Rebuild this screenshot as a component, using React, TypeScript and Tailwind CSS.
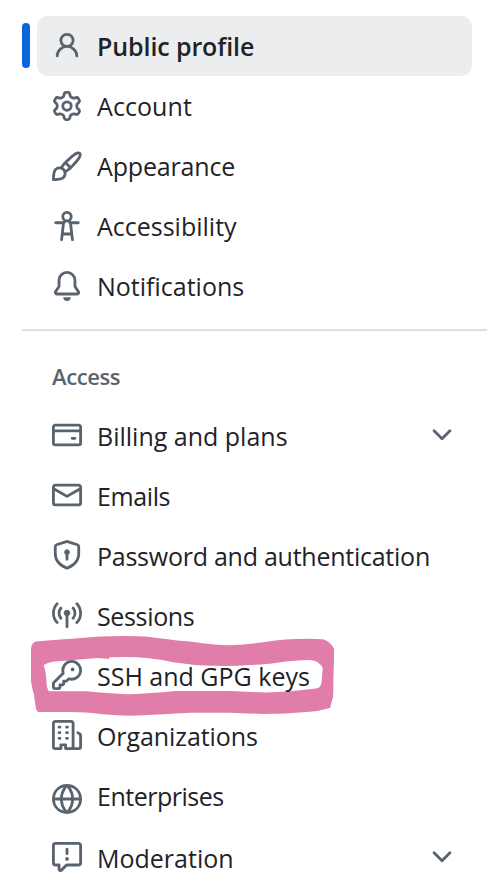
import type { ReactNode } from "react";

const ICONS = {
  person:
    "M10.561 8.073a6.005 6.005 0 0 1 3.432 5.142.75.75 0 1 1-1.498.07 4.5 4.5 0 0 0-8.99 0 .75.75 0 0 1-1.498-.07 6.004 6.004 0 0 1 3.431-5.142 3.999 3.999 0 1 1 5.123 0ZM10.5 5a2.5 2.5 0 1 0-5 0 2.5 2.5 0 0 0 5 0Z",
  gear: "M8 0a8.2 8.2 0 0 1 .701.031C9.444.095 9.99.645 10.16 1.29l.288 1.107c.018.066.079.158.212.224.231.114.454.243.668.386.123.082.233.09.299.071l1.103-.303c.644-.176 1.392.021 1.82.63.27.385.506.792.704 1.218.315.675.111 1.422-.364 1.891l-.814.806c-.049.048-.098.147-.088.294.016.257.016.515 0 .772-.01.147.038.246.088.294l.814.806c.475.469.679 1.216.364 1.891a7.977 7.977 0 0 1-.704 1.217c-.428.61-1.176.807-1.82.63l-1.102-.302c-.067-.019-.177-.011-.3.071a5.909 5.909 0 0 1-.668.386c-.133.066-.194.158-.211.224l-.29 1.106c-.168.646-.715 1.196-1.458 1.26a8.006 8.006 0 0 1-1.402 0c-.743-.064-1.289-.614-1.458-1.26l-.289-1.106c-.018-.066-.079-.158-.212-.224a5.738 5.738 0 0 1-.668-.386c-.123-.082-.233-.09-.299-.071l-1.103.303c-.644.176-1.392-.021-1.82-.63a8.12 8.12 0 0 1-.704-1.218c-.315-.675-.111-1.422.363-1.891l.815-.806c.05-.048.098-.147.088-.294a6.214 6.214 0 0 1 0-.772c.01-.147-.038-.246-.088-.294l-.815-.806C.635 6.045.431 5.298.746 4.623a7.92 7.92 0 0 1 .704-1.217c.428-.61 1.176-.807 1.82-.63l1.102.302c.067.019.177.011.3-.071.214-.143.437-.272.668-.386.133-.066.194-.158.211-.224l.29-1.106C6.009.645 6.556.095 7.299.03 7.53.01 7.764 0 8 0Zm-.571 1.525c-.036.003-.108.036-.137.146l-.289 1.105c-.147.561-.549.967-.998 1.189-.173.086-.34.183-.5.29-.417.278-.97.423-1.529.27l-1.103-.303c-.109-.03-.175.016-.195.045-.22.312-.412.644-.573.99-.014.031-.021.11.059.19l.815.806c.411.406.562.957.53 1.456a4.709 4.709 0 0 0 0 .582c.032.499-.119 1.05-.53 1.456l-.815.806c-.081.08-.073.159-.059.19.162.346.353.677.573.989.02.03.085.076.195.046l1.102-.303c.56-.153 1.113-.008 1.53.27.161.107.328.204.501.29.447.222.85.629.997 1.189l.289 1.105c.029.109.101.143.137.146a6.6 6.6 0 0 0 1.142 0c.036-.003.108-.036.137-.146l.289-1.105c.147-.561.549-.967.998-1.189.173-.086.34-.183.5-.29.417-.278.97-.423 1.529-.27l1.103.303c.109.029.175-.016.195-.045.22-.313.411-.644.573-.99.014-.031.021-.11-.059-.19l-.815-.806c-.411-.406-.562-.957-.53-1.456a4.709 4.709 0 0 0 0-.582c-.032-.499.119-1.05.53-1.456l.815-.806c.081-.08.073-.159.059-.19a6.464 6.464 0 0 0-.573-.989c-.02-.03-.085-.076-.195-.046l-1.102.303c-.56.153-1.113.008-1.53-.27a4.44 4.44 0 0 0-.501-.29c-.447-.222-.85-.629-.997-1.189l-.289-1.105c-.029-.11-.101-.143-.137-.146a6.6 6.6 0 0 0-1.142 0ZM11 8a3 3 0 1 1-6 0 3 3 0 0 1 6 0ZM9.5 8a1.5 1.5 0 1 0-3.001.001A1.5 1.5 0 0 0 9.5 8Z",
  paintbrush:
    "M11.134 1.535c.7-.509 1.416-.942 2.076-1.155.649-.21 1.463-.267 2.069.34.603.601.568 1.411.368 2.07-.202.668-.624 1.39-1.125 2.096-1.011 1.424-2.496 2.987-3.775 4.249-1.098 1.084-2.132 1.839-3.04 2.3a3.744 3.744 0 0 1-1.055 3.217c-.431.431-1.065.691-1.657.861-.614.177-1.294.287-1.914.357A21.151 21.151 0 0 1 .797 16H.743l.007-.75H.749L.742 16a.75.75 0 0 1-.743-.742l.743-.008-.742.007v-.054a21.25 21.25 0 0 1 .13-2.284c.067-.647.187-1.287.358-1.914.17-.591.43-1.226.86-1.657a3.746 3.746 0 0 1 3.227-1.054c.466-.893 1.225-1.907 2.314-2.982 1.271-1.255 2.833-2.75 4.245-3.777ZM1.62 13.089c-.051.464-.086.929-.104 1.395.466-.018.932-.053 1.396-.104a10.511 10.511 0 0 0 1.668-.309c.526-.151.856-.325 1.011-.48a2.25 2.25 0 1 0-3.182-3.182c-.155.155-.329.485-.48 1.01a10.515 10.515 0 0 0-.309 1.67Zm10.396-10.34c-1.224.89-2.605 2.189-3.822 3.384l1.718 1.718c1.21-1.205 2.51-2.597 3.387-3.833.47-.662.78-1.227.912-1.662.134-.444.032-.551.009-.575h-.001V1.78c-.014-.014-.113-.113-.548.027-.432.14-.995.462-1.655.942Zm-4.832 7.266-.001.001a9.859 9.859 0 0 0 1.63-1.142L7.155 7.216a9.7 9.7 0 0 0-1.161 1.607c.482.302.889.71 1.19 1.192Z",
  accessibility:
    "M9.923 5.302c.063.063.122.129.178.198H14A.75.75 0 0 1 14 7h-3.3l.578 5.163.362 2.997a.75.75 0 0 1-1.49.18L9.868 13H6.132l-.282 2.34a.75.75 0 0 1-1.49-.18l.362-2.997L5.3 7H2a.75.75 0 0 1 0-1.5h3.9a2.54 2.54 0 0 1 .176-.198 3 3 0 1 1 3.847 0ZM9.2 7.073h-.001a1.206 1.206 0 0 0-2.398 0L6.305 11.5h3.39ZM9.5 3a1.5 1.5 0 1 0-3.001.001A1.5 1.5 0 0 0 9.5 3Z",
  bell: "M8 16a2 2 0 0 0 1.985-1.75c.017-.137-.097-.25-.235-.25h-3.5c-.138 0-.252.113-.235.25A2 2 0 0 0 8 16ZM3 5a5 5 0 0 1 10 0v2.947c0 .05.015.098.042.139l1.703 2.555A1.519 1.519 0 0 1 13.482 13H2.518a1.516 1.516 0 0 1-1.263-2.36l1.703-2.554A.255.255 0 0 0 3 7.947Zm5-3.5A3.5 3.5 0 0 0 4.5 5v2.947c0 .346-.102.683-.294.97l-1.703 2.556a.017.017 0 0 0-.003.01l.001.006c0 .002.002.004.004.006l.006.004.007.001h10.964l.007-.001.006-.004.004-.006.001-.007a.017.017 0 0 0-.003-.01l-1.703-2.554a1.745 1.745 0 0 1-.294-.97V5A3.5 3.5 0 0 0 8 1.5Z",
  card: "M10.75 9a.75.75 0 0 0 0 1.5h1.5a.75.75 0 0 0 0-1.5h-1.5Z M0 3.75C0 2.784.784 2 1.75 2h12.5c.966 0 1.75.784 1.75 1.75v8.5A1.75 1.75 0 0 1 14.25 14H1.75A1.75 1.75 0 0 1 0 12.25ZM14.5 6.5h-13v5.75c0 .138.112.25.25.25h12.5a.25.25 0 0 0 .25-.25Zm0-2.75a.25.25 0 0 0-.25-.25H1.75a.25.25 0 0 0-.25.25V5h13Z",
  mail: "M1.75 2h12.5c.966 0 1.75.784 1.75 1.75v8.5A1.75 1.75 0 0 1 14.25 14H1.75A1.75 1.75 0 0 1 0 12.25v-8.5C0 2.784.784 2 1.75 2ZM1.5 12.251c0 .138.112.25.25.25h12.5a.25.25 0 0 0 .25-.25V5.809L8.38 9.397a.75.75 0 0 1-.76 0L1.5 5.809v6.442Zm13-8.181v-.32a.25.25 0 0 0-.25-.25H1.75a.25.25 0 0 0-.25.25v.32L8 7.88Z",
  shield:
    "m8.533.133 5.25 1.68A1.75 1.75 0 0 1 15 3.48V7c0 1.566-.32 3.182-1.303 4.682-.983 1.498-2.585 2.813-5.032 3.855a1.697 1.697 0 0 1-1.33 0c-2.447-1.042-4.049-2.357-5.032-3.855C1.32 10.182 1 8.566 1 7V3.48a1.75 1.75 0 0 1 1.217-1.667l5.25-1.68a1.748 1.748 0 0 1 1.066 0Zm-.61 1.429.001.001-5.25 1.68a.251.251 0 0 0-.174.237V7c0 1.36.275 2.666 1.057 3.859.784 1.194 2.121 2.342 4.366 3.298a.196.196 0 0 0 .154 0c2.245-.957 3.582-2.103 4.366-3.297C13.225 9.666 13.5 8.358 13.5 7V3.48a.25.25 0 0 0-.174-.238l-5.25-1.68a.25.25 0 0 0-.153 0ZM9.5 6.5c0 .536-.286 1.032-.75 1.3v2.45a.75.75 0 0 1-1.5 0V7.8A1.5 1.5 0 1 1 9.5 6.5Z",
  broadcast:
    "M8.75 8.582v5.668a.75.75 0 0 1-1.5 0V8.582a1.75 1.75 0 1 1 1.5 0Zm3.983-7.125a.75.75 0 0 1 1.06.026A7.976 7.976 0 0 1 16 7c0 2.139-.84 4.083-2.207 5.517a.75.75 0 1 1-1.086-1.034A6.474 6.474 0 0 0 14.5 7a6.474 6.474 0 0 0-1.793-4.483.75.75 0 0 1 .026-1.06Zm-9.466 0c.3.286.312.76.026 1.06A6.474 6.474 0 0 0 1.5 7a6.47 6.47 0 0 0 1.793 4.483.75.75 0 0 1-1.086 1.034A7.973 7.973 0 0 1 0 7c0-2.139.84-4.083 2.207-5.517a.75.75 0 0 1 1.06-.026Zm8.556 2.321A4.988 4.988 0 0 1 13 7a4.988 4.988 0 0 1-1.177 3.222.75.75 0 1 1-1.146-.967A3.487 3.487 0 0 0 11.5 7c0-.86-.309-1.645-.823-2.255a.75.75 0 0 1 1.146-.967Zm-6.492.958A3.48 3.48 0 0 0 4.5 7a3.48 3.48 0 0 0 .823 2.255.75.75 0 0 1-1.146.967A4.981 4.981 0 0 1 3 7a4.982 4.982 0 0 1 1.188-3.236.75.75 0 1 1 1.143.972Z",
  key: "M10.5 0a5.499 5.499 0 1 1-1.288 10.848l-.932.932a.749.749 0 0 1-.53.22H7v.75a.749.749 0 0 1-.22.53l-.5.5a.749.749 0 0 1-.53.22H5v.75a.749.749 0 0 1-.22.53l-.5.5a.749.749 0 0 1-.53.22h-2A1.75 1.75 0 0 1 0 14.25v-2c0-.199.079-.389.22-.53l4.932-4.932A5.5 5.5 0 0 1 10.5 0Zm-4 5.5c-.001.431.069.86.205 1.269a.75.75 0 0 1-.181.768L1.5 12.56v1.69c0 .138.112.25.25.25h1.69l.06-.06v-1.19a.75.75 0 0 1 .75-.75h1.19l.06-.06v-1.19a.75.75 0 0 1 .75-.75h1.19l1.023-1.025a.75.75 0 0 1 .768-.18A4 4 0 1 0 6.5 5.5ZM11 6a1 1 0 1 1 0-2 1 1 0 0 1 0 2Z",
  organization:
    "M1.75 16A1.75 1.75 0 0 1 0 14.25V1.75C0 .784.784 0 1.75 0h8.5C11.216 0 12 .784 12 1.75v12.5c0 .085-.006.168-.018.25h2.268a.25.25 0 0 0 .25-.25V8.285a.25.25 0 0 0-.111-.208l-1.055-.703a.749.749 0 1 1 .832-1.248l1.055.703c.487.325.779.871.779 1.456v5.965A1.75 1.75 0 0 1 14.25 16h-3.5a.766.766 0 0 1-.197-.026c-.099.017-.2.026-.303.026h-3a.75.75 0 0 1-.75-.75V14h-1v1.25a.75.75 0 0 1-.75.75Zm-.25-1.75c0 .138.112.25.25.25H4v-1.25a.75.75 0 0 1 .75-.75h2.5a.75.75 0 0 1 .75.75v1.25h2.25a.25.25 0 0 0 .25-.25V1.75a.25.25 0 0 0-.25-.25h-8.5a.25.25 0 0 0-.25.25ZM3.75 6h.5a.75.75 0 0 1 0 1.5h-.5a.75.75 0 0 1 0-1.5ZM3 3.75A.75.75 0 0 1 3.75 3h.5a.75.75 0 0 1 0 1.5h-.5A.75.75 0 0 1 3 3.75Zm4 3A.75.75 0 0 1 7.75 6h.5a.75.75 0 0 1 0 1.5h-.5A.75.75 0 0 1 7 6.75ZM7.75 3h.5a.75.75 0 0 1 0 1.5h-.5a.75.75 0 0 1 0-1.5ZM3 9.75A.75.75 0 0 1 3.75 9h.5a.75.75 0 0 1 0 1.5h-.5A.75.75 0 0 1 3 9.75ZM7.75 9h.5a.75.75 0 0 1 0 1.5h-.5a.75.75 0 0 1 0-1.5Z",
  globe:
    "M8 0a8 8 0 1 1 0 16A8 8 0 0 1 8 0ZM5.78 8.75a9.64 9.64 0 0 0 1.363 4.177c.255.426.542.832.857 1.215.245-.296.551-.705.857-1.215A9.64 9.64 0 0 0 10.22 8.75Zm4.44-1.5a9.64 9.64 0 0 0-1.363-4.177c-.307-.51-.612-.919-.857-1.215a9.927 9.927 0 0 0-.857 1.215A9.64 9.64 0 0 0 5.78 7.25Zm-5.944 1.5H1.543a6.507 6.507 0 0 0 4.666 5.5c-.123-.181-.24-.365-.352-.552-.715-1.192-1.437-2.874-1.581-4.948Zm-2.733-1.5h2.733c.144-2.074.866-3.756 1.58-4.948.12-.197.237-.381.353-.552a6.507 6.507 0 0 0-4.666 5.5Zm10.181 1.5c-.144 2.074-.866 3.756-1.58 4.948-.12.197-.237.381-.353.552a6.507 6.507 0 0 0 4.666-5.5Zm2.733-1.5a6.507 6.507 0 0 0-4.666-5.5c.123.181.24.365.353.552.714 1.192 1.436 2.874 1.58 4.948Z",
  report:
    "M0 1.75C0 .784.784 0 1.75 0h12.5C15.216 0 16 .784 16 1.75v9.5A1.75 1.75 0 0 1 14.25 13H8.06l-2.573 2.573A1.458 1.458 0 0 1 3 14.543V13H1.75A1.75 1.75 0 0 1 0 11.25Zm1.75-.25a.25.25 0 0 0-.25.25v9.5c0 .138.112.25.25.25h2a.75.75 0 0 1 .75.75v2.19l2.72-2.72a.749.749 0 0 1 .53-.22h6.5a.25.25 0 0 0 .25-.25v-9.5a.25.25 0 0 0-.25-.25Zm7 2.25v2.5a.75.75 0 0 1-1.5 0v-2.5a.75.75 0 0 1 1.5 0ZM9 9a1 1 0 1 1-2 0 1 1 0 0 1 2 0Z",
  chevron:
    "M12.78 5.22a.749.749 0 0 1 0 1.06l-4.25 4.25a.749.749 0 0 1-1.06 0L3.22 6.28a.749.749 0 1 1 1.06-1.06L8 8.939l3.72-3.719a.749.749 0 0 1 1.06 0Z",
};

type IconName = keyof typeof ICONS;

function Icon({ name, className = "" }: { name: IconName; className?: string }) {
  return (
    <svg viewBox="0 0 16 16" fill="currentColor" aria-hidden="true" className={`size-[30px] shrink-0 text-[#59636e] ${className}`}>
      <path d={ICONS[name]} />
    </svg>
  );
}

type ItemProps = {
  icon: IconName;
  label: string;
  tracking?: string;
  iconClass?: string;
  expandable?: boolean;
  active?: boolean;
  children?: ReactNode;
};

function Item({ icon, label, tracking = "", iconClass = "", expandable, active, children }: ItemProps) {
  return (
    <li className="relative flex h-[60px]">
      {active && <span className="absolute top-[7px] -left-[15px] h-[45px] w-2 rounded-full bg-[#0b66da]" />}
      {children}
      <a
        className={`relative flex w-[435px] items-start rounded-[11px] pr-[15px] pl-[15px] ${active ? "bg-[#ebedee] font-semibold" : ""}`}
      >
        <Icon name={icon} className={`mt-[15px] ${iconClass}`} />
        <span className={`ml-[15px] flex-1 pt-[13px] text-[25px] leading-[36px] whitespace-nowrap ${tracking}`}>{label}</span>
        {expandable && <Icon name="chevron" className="mt-[15px]" />}
      </a>
    </li>
  );
}

function Highlight() {
  return (
    <svg viewBox="26 632 312 88" className="absolute top-[-13px] -left-[11px] h-[88px] w-[312px]" aria-hidden="true">
      <path
        fill="#e07da8"
        fillRule="evenodd"
        d="M31 649Q31 643 36 641.5Q60 639.5 75 638.5L100 636.5Q130 635.5 150 637Q180 641 190 641.5Q212 645 230 645.3Q248 644.5 263 642.3Q285 639 297 639Q312 638.5 323 639.3Q331 642 334 649V659L333.3 680Q333.5 690 333 697L330 708Q318 711.5 307 712Q285 714 263 714Q240 713 230 712.7H190Q160 714.5 145 715.2Q125 716.5 103 714.3Q85 712 70 712H38L36 709L34 695Q31.5 686 31 680ZM43.5 665Q49 662 53 661.7L73 660L98 658L109 659L109.5 657.3Q130 656.8 140 657.5Q155 658.5 167 661Q180 663.5 190 664.3Q200 666 215 665.7Q235 666.3 247 665Q265 664.5 277 662.7Q295 660 310 660Q319 660.5 322.7 668L321.5 683Q320.5 688 316 688.5L293 691Q275 692.7 260 692.3L230 691H175Q150 693.5 130 694.3Q105 693.5 87 691.3H49Q47.5 690 46.7 685Q46 670 43.5 665Z"
      />
    </svg>
  );
}

export default function App() {
  return (
    <nav className="h-[889px] w-[488px] overflow-hidden bg-white pt-4 font-['Open_Sans','Noto_Sans',sans-serif] text-[#1f2328]">
      <ul className="pl-[37px] [&_a>span]:-mt-px">
        <Item icon="person" label="Public profile" tracking="tracking-[-0.1px]" active />
        <Item icon="gear" label="Account" tracking="tracking-[0.08px]" />
        <Item icon="paintbrush" label="Appearance" tracking="tracking-[-0.16px]" />
        <Item icon="accessibility" label="Accessibility" />
        <Item icon="bell" label="Notifications" />
      </ul>
      <div className="mt-[13px] mr-[1px] ml-[22px] h-[2px] bg-[#dfdfe0]" />
      <h2 className="mt-[30px] h-11 pl-[52px] text-[22px] leading-[30px] font-semibold tracking-[-0.4px] text-[#59636e]">Access</h2>
      <ul className="pl-[37px]">
        <Item icon="card" label="Billing and plans" expandable />
        <Item icon="mail" label="Emails" tracking="tracking-[-0.4px]" />
        <Item icon="shield" label="Password and authentication" tracking="tracking-[-0.25px]" />
        <Item icon="broadcast" label="Sessions" tracking="tracking-[-0.35px]" />
        <Item icon="key" label="SSH and GPG keys">
          <Highlight />
        </Item>
        <Item icon="organization" label="Organizations" tracking="tracking-[-0.08px]" />
        <Item icon="globe" label="Enterprises" tracking="tracking-[-0.48px]" iconClass="translate-y-1" />
        <li className="h-0.5" />
        <Item icon="report" label="Moderation" expandable />
      </ul>
    </nav>
  );
}
